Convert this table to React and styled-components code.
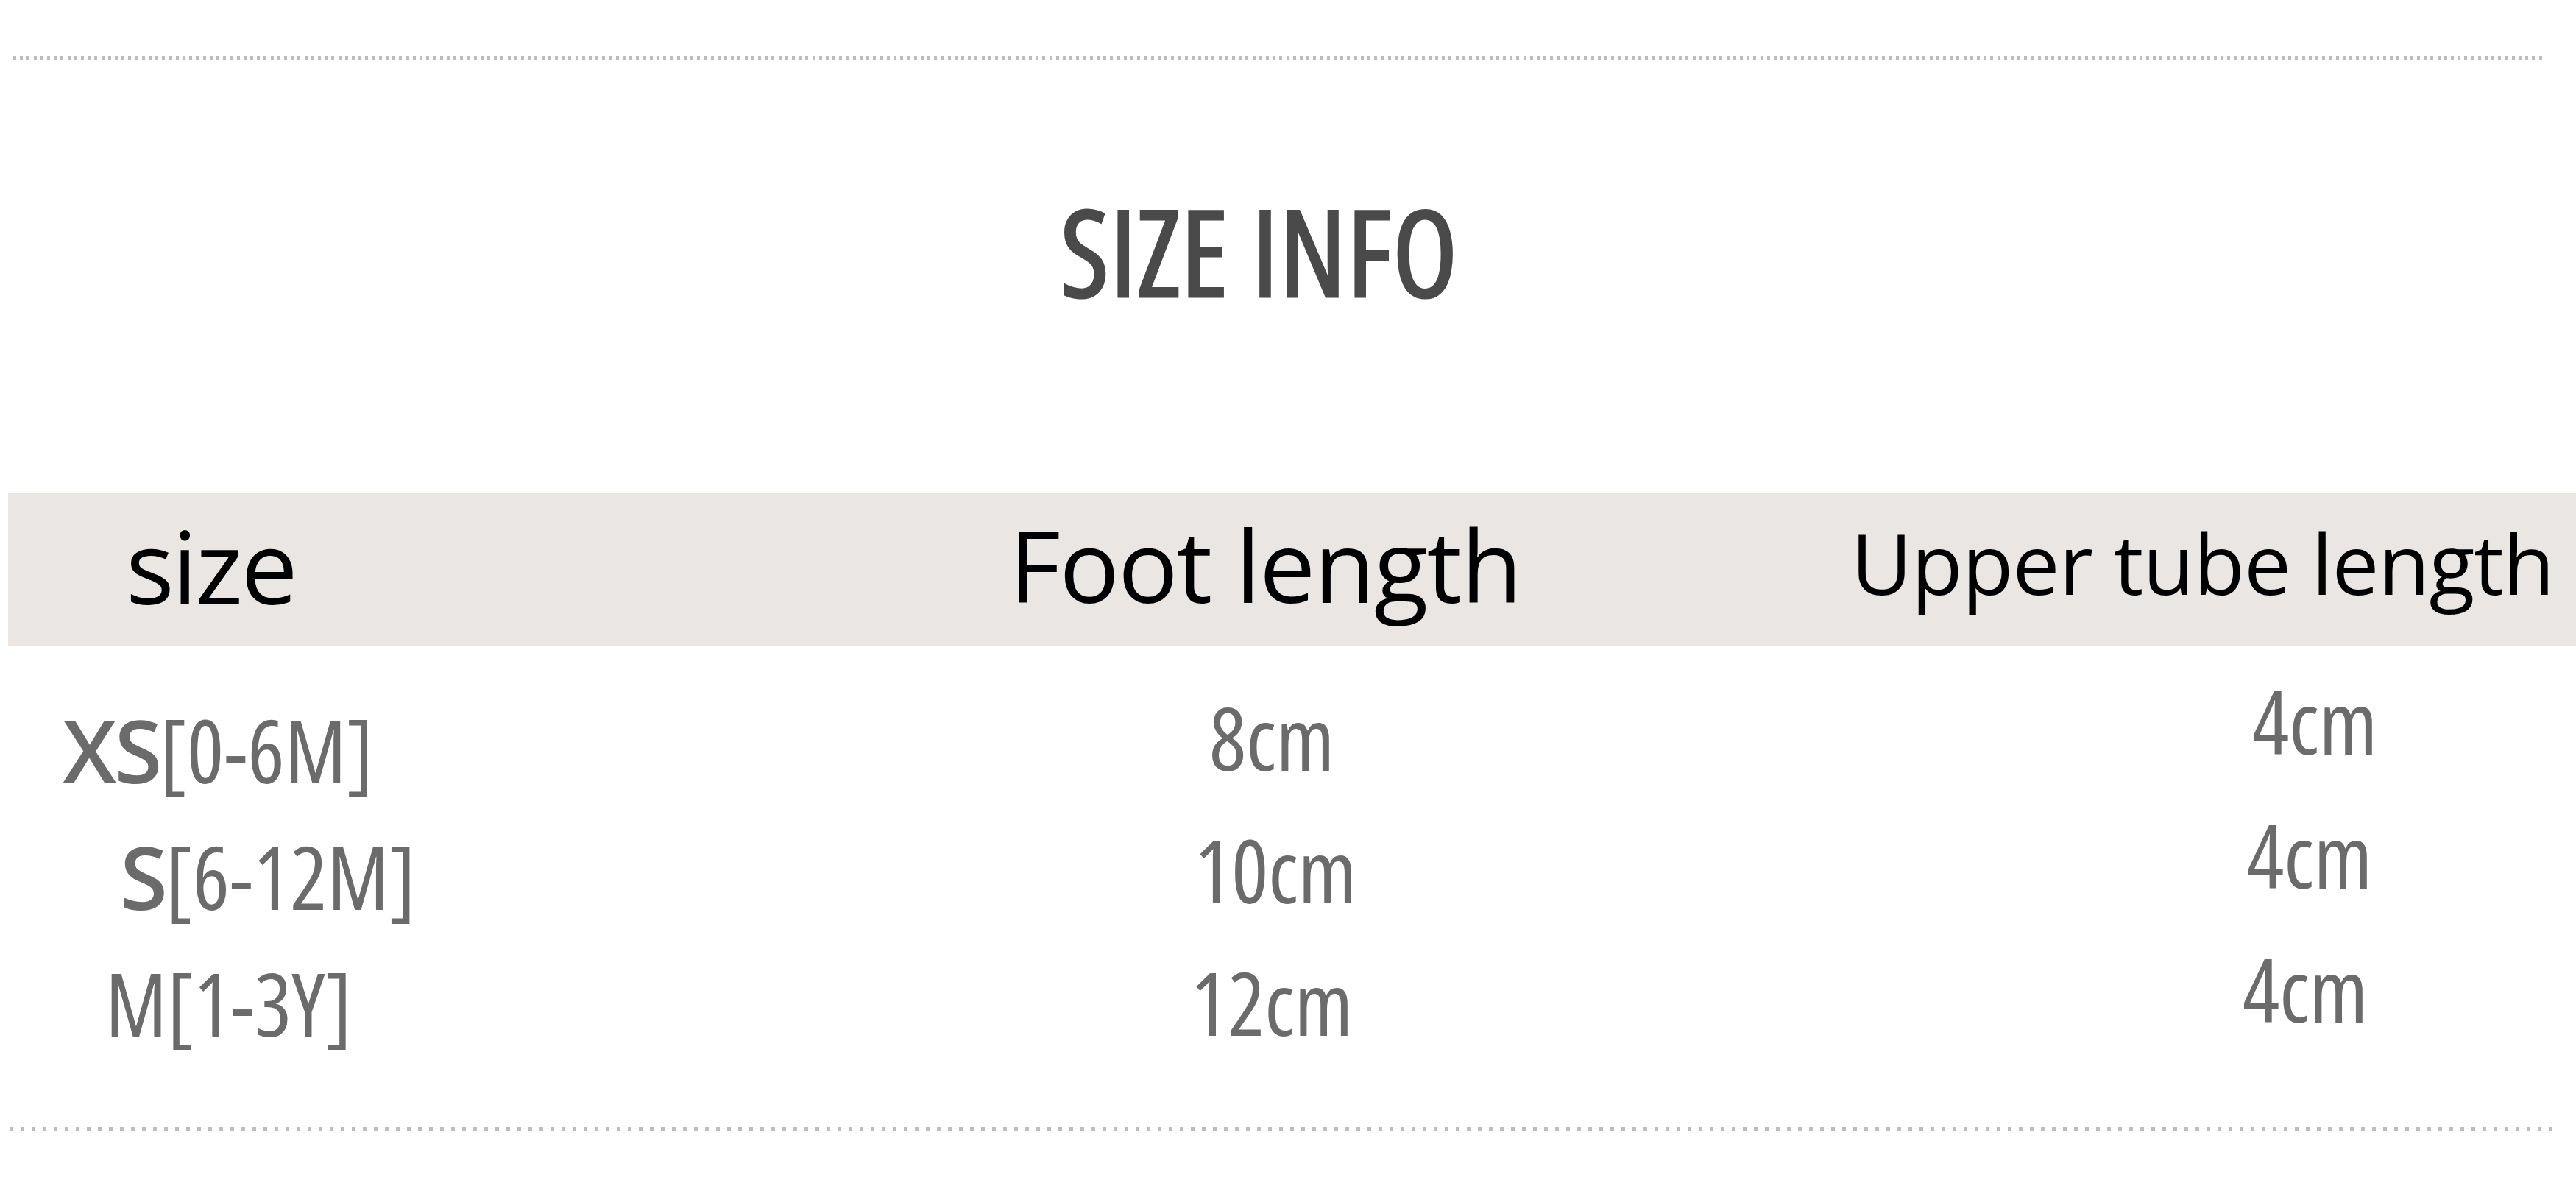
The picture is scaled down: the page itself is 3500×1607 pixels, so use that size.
import React from "react";
import styled, { createGlobalStyle } from "styled-components";

const GlobalStyle = createGlobalStyle`
  html, body {
    margin: 0;
    padding: 0;
    background: #ffffff;
  }
`;

const Page = styled.div`
  width: 3500px;
  height: 1607px;
  overflow: hidden;
  background: #ffffff;
  display: flex;
  flex-direction: column;
`;

const Dots = styled.div`
  height: ${(p) => p.$h}px;
  margin: ${(p) => p.$top}px 0 0 ${(p) => p.$left}px;
  width: ${(p) => p.$w}px;
  background: repeating-linear-gradient(
    to right,
    #bdbdbd 0,
    #bdbdbd ${(p) => p.$dot}px,
    transparent ${(p) => p.$dot}px,
    transparent ${(p) => p.$gap}px
  );
`;

const TitleBar = styled.div`
  height: 589px;
  box-sizing: border-box;
  display: flex;
  justify-content: center;
  align-items: flex-start;
  padding: 178px 78px 0 0;
`;

const Title = styled.h1`
  margin: 0;
  font-family: "Open Sans", "Liberation Sans", sans-serif;
  font-stretch: condensed;
  font-weight: 400;
  font-size: 162px;
  line-height: 1;
  color: #4a4a4a;
  -webkit-text-stroke: 3px #4a4a4a;
  letter-spacing: 1px;
`;

const Grid = styled.div`
  display: grid;
  grid-template-columns: 1189px 1042px 1fr;
  margin-left: 11px;
`;

const HeadBand = styled(Grid)`
  height: 207px;
  background: #e9e6e3;
  align-items: center;
`;

const HeadCell = styled.div`
  padding-left: ${(p) => p.$indent}px;
  padding-bottom: ${(p) => p.$lift || 0}px;
  font-family: "Open Sans", "Noto Sans", "Liberation Sans", sans-serif;
  font-size: ${(p) => p.$size}px;
  letter-spacing: ${(p) => p.$track || 0}px;
  line-height: 1;
  color: #000000;
  white-space: nowrap;
`;

const Body = styled(Grid)`
  height: 654px;
`;

const Col = styled.div`
  display: flex;
  flex-direction: column;
  padding-top: ${(p) => p.$top}px;
`;

const Cell = styled.div`
  height: ${(p) => p.$row}px;
  display: flex;
  align-items: center;
  padding-left: ${(p) => p.$indent}px;
  font-family: "Open Sans", "Liberation Sans", sans-serif;
  font-stretch: condensed;
  font-size: 118px;
  color: #6b6b6b;
  white-space: nowrap;
`;

const Code = styled.span`
  font-stretch: ${(p) => (p.$bold ? "normal" : "condensed")};
  font-weight: ${(p) => (p.$bold ? 600 : 400)};
  font-size: ${(p) => (p.$bold ? 118 : 118)}px;
  letter-spacing: ${(p) => (p.$bold ? -3 : 0)}px;
`;

const sizes = [
  { code: "XS", range: "[0-6M]", indent: 74, bold: true },
  { code: "S", range: "[6-12M]", indent: 152, bold: true },
  { code: "M", range: "[1-3Y]", indent: 132, bold: false },
];

const foot = [
  { v: "8cm", indent: 443 },
  { v: "10cm", indent: 423 },
  { v: "12cm", indent: 418 },
];

const tube = [
  { v: "4cm", indent: 818 },
  { v: "4cm", indent: 811 },
  { v: "4cm", indent: 805 },
];

export default function App() {
  return (
    <>
      <GlobalStyle />
      <Page>
        <Dots $top={76} $left={18} $w={3437} $h={5} $dot={4} $gap={9.2} />
        <TitleBar>
          <Title>SIZE INFO</Title>
        </TitleBar>
        <HeadBand>
          <HeadCell $indent={160} $size={138} $track={-3} $lift={14}>size</HeadCell>
          <HeadCell $indent={171} $size={136} $track={-2} $lift={14}>Foot length</HeadCell>
          <HeadCell $indent={273} $size={114} $track={-1} $lift={20}>Upper tube length</HeadCell>
        </HeadBand>
        <Body>
          <Col $top={55}>
            {sizes.map((s) => (
              <Cell key={s.code} $row={172} $indent={s.indent}>
                <Code $bold={s.bold}>{s.code}</Code>
                {s.range}
              </Cell>
            ))}
          </Col>
          <Col $top={34}>
            {foot.map((f) => (
              <Cell key={f.v} $row={180} $indent={f.indent}>
                {f.v}
              </Cell>
            ))}
          </Col>
          <Col $top={11}>
            {tube.map((t, i) => (
              <Cell key={i} $row={182} $indent={t.indent}>
                {t.v}
              </Cell>
            ))}
          </Col>
        </Body>
        <Dots $top={0} $left={13} $w={3464} $h={5} $dot={5} $gap={15} />
      </Page>
    </>
  );
}
